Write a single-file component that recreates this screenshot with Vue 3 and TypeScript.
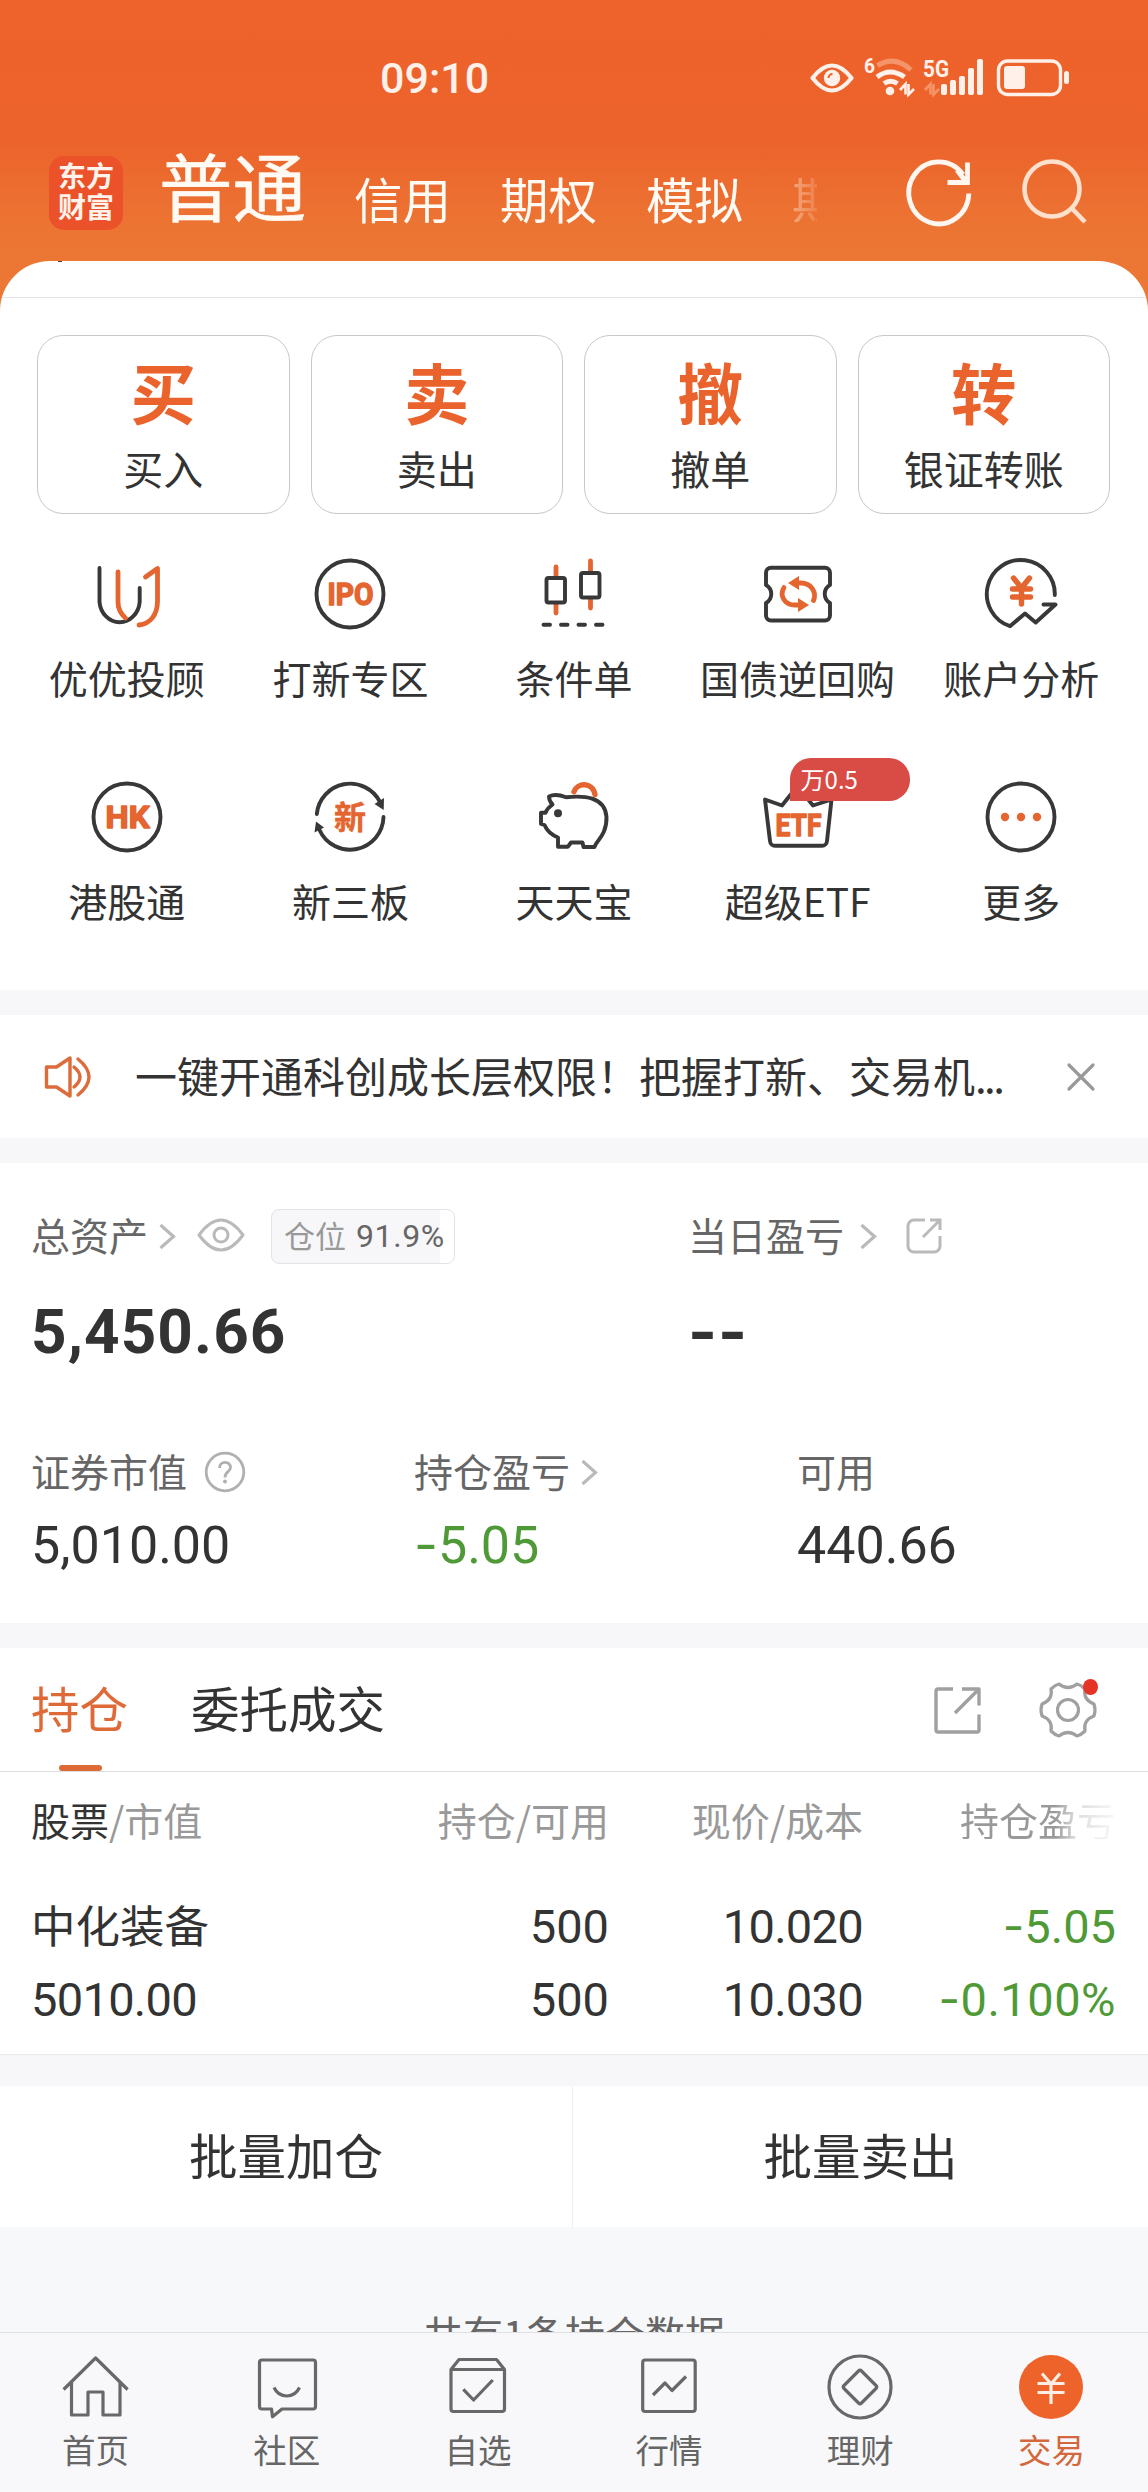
<script setup lang="ts">
interface Action { glyph: string; label: string }
interface Shortcut { icon: string; label: string; badge?: string }
interface NavItem { icon: string; label: string; active?: boolean }

const accounts: string[] = ['信用', '期权', '模拟']

const actions: Action[] = [
  { glyph: '买', label: '买入' },
  { glyph: '卖', label: '卖出' },
  { glyph: '撤', label: '撤单' },
  { glyph: '转', label: '银证转账' },
]

const shortcuts: Shortcut[] = [
  { icon: 'advisor', label: '优优投顾' },
  { icon: 'ipo', label: '打新专区' },
  { icon: 'candles', label: '条件单' },
  { icon: 'ticket', label: '国债逆回购' },
  { icon: 'analysis', label: '账户分析' },
  { icon: 'hk', label: '港股通' },
  { icon: 'neeq', label: '新三板' },
  { icon: 'piggy', label: '天天宝' },
  { icon: 'etf', label: '超级ETF', badge: '万0.5' },
  { icon: 'more', label: '更多' },
]

const navItems: NavItem[] = [
  { icon: 'home', label: '首页' },
  { icon: 'community', label: '社区' },
  { icon: 'watchlist', label: '自选' },
  { icon: 'market', label: '行情' },
  { icon: 'wealth', label: '理财' },
  { icon: 'trade', label: '交易', active: true },
]
</script>

<template>
  <div class="app">
    <div class="top">
      <div class="status">
        <span class="clock">09:10</span>
        <svg class="status-icons" width="264" height="48" viewBox="808 54 264 48" fill="none" stroke="#fff1ea">
          <path d="M812.500 78Q832 53 851.500 78Q832 103 812.500 78Z" stroke-width="4.200" stroke-linejoin="round" />
          <circle cx="832" cy="78" r="8.200" fill="#fff1ea" stroke="none" />
          <path d="M828.500 78A4 4 0 0 1 832.500 74" stroke="#ed622b" stroke-width="2" />
          <text x="864" y="73" class="net" font-size="20" textLength="11" lengthAdjust="spacingAndGlyphs">6</text>
          <path d="M877.500 65.500Q895 55 911 70" stroke="#f59468" stroke-width="5" />
          <path d="M877 77Q890 67 904.500 77" stroke-width="5" />
          <path d="M884 83.500Q890.500 79 897.500 83.500" stroke-width="5" />
          <circle cx="890" cy="91" r="4.300" fill="#fff1ea" stroke="none" />
          <path d="M900 90L905.500 84V94.500M908.500 84V94.500L914 89" stroke-width="2.600" />
          <text x="923" y="77" class="net" font-size="24" textLength="26" lengthAdjust="spacingAndGlyphs">5G</text>
          <path d="M925 90L930.500 84V94.500M933.500 84V94.500L939 89" stroke="#f59468" stroke-width="2.600" />
          <g fill="#fff1ea" stroke="none">
            <rect x="941" y="84" width="6" height="11" rx="2" />
            <rect x="950" y="80" width="6" height="15" rx="2" />
            <rect x="959" y="76" width="6" height="19" rx="2" />
            <rect x="968" y="68" width="6" height="27" rx="2" />
            <rect x="977" y="59" width="6" height="36" rx="2" />
            <rect x="1004" y="66" width="21" height="23" rx="3" />
            <rect x="1064" y="71" width="5" height="13" rx="2.500" />
          </g>
          <rect x="998.500" y="61" width="62" height="33.500" rx="9" stroke-width="3.400" />
        </svg>
      </div>

      <div class="header">
        <div class="logo">东方<br>财富</div>
        <div class="accounts">
          <span class="account current">普通</span>
          <span v-for="name in accounts" :key="name" class="account">{{ name }}</span>
          <span class="account cut">期货</span>
        </div>
        <svg class="refresh" width="70" height="70" viewBox="0 0 70 70" fill="none" stroke="#fff6ef" stroke-width="4.800">
          <path d="M65.800 37.500A30 31 0 1 1 60 18.500" />
          <path d="M64.500 6.500V26.500H44.500M63 26L54 14" />
        </svg>
        <svg class="search" width="70" height="70" viewBox="0 0 70 70" fill="none" stroke="#ffe0cd" stroke-width="4.600">
          <circle cx="33" cy="33" r="27.500" />
          <path d="M52.500 52L66 66" />
        </svg>
      </div>

      <div class="panel">
        <div class="panel-head"><i class="peek"></i></div>
        <div class="actions">
          <div v-for="a in actions" :key="a.label" class="action">
            <b>{{ a.glyph }}</b>
            <span>{{ a.label }}</span>
          </div>
        </div>

        <div class="shortcuts">
          <div v-for="s in shortcuts" :key="s.icon" class="shortcut">
            <div class="icon-wrap">
              <svg width="72" height="72" viewBox="0 0 72 72" class="ico">
                <g v-if="s.icon === 'advisor'">
                  <path d="M8.500 10V44A20.200 22.500 0 0 0 48.700 44V30" />
                  <path class="o" d="M27 14V44C27 51 30 56 34.500 60M54.500 19L66.500 10.500V43C66.500 57 59 66 48 67" />
                </g>
                <g v-else-if="s.icon === 'ipo'">
                  <circle cx="36" cy="36" r="33.500" />
                  <text x="13.500" y="47" font-size="30.500" textLength="46" lengthAdjust="spacingAndGlyphs">IPO</text>
                </g>
                <g v-else-if="s.icon === 'candles'">
                  <path class="o" d="M18 9V18M18 46V55M52.500 3V13M52.500 41V50" />
                  <rect x="8.500" y="20" width="18.500" height="24.500" rx="2" />
                  <rect x="43" y="15" width="18.500" height="24.500" rx="2" />
                  <path d="M5.500 66.700H12M23 66.700H29.500M40.500 66.700H47M58 66.700H64.500" />
                </g>
                <g v-else-if="s.icon === 'ticket'">
                  <path d="M9 9.700H63A5 5 0 0 1 68 14.700V27C61 31 61 41 68 45V57.500A5 5 0 0 1 63 62.500H9A5 5 0 0 1 4 57.500V45C11 41 11 31 4 27V14.700A5 5 0 0 1 9 9.700Z" />
                  <path class="o" d="M36 25H39C49 25 55 34 51.500 42.500M22 29.500C17 38 23 47 33 47H37" />
                  <path class="of" d="M26 25L37 18V32ZM47 47L36 40V54Z" />
                </g>
                <g v-else-if="s.icon === 'analysis'">
                  <path d="M69.800 37A34 34 0 1 0 25 68.200L40 55.500L50.700 64.500L70.500 46.500H58.500" />
                  <path class="o thick" d="M28.500 20L36.500 30L44.500 20M36.500 30V46M27.500 31H45.500M27.500 39H45.500" />
                </g>
                <g v-else-if="s.icon === 'hk'">
                  <circle cx="36" cy="36" r="33.500" />
                  <text x="14.500" y="47" font-size="30.500" textLength="44" lengthAdjust="spacingAndGlyphs">HK</text>
                </g>
                <g v-else-if="s.icon === 'neeq'">
                  <path d="M2.800 33A33.500 33.500 0 0 1 66 21M69.500 36A33.500 33.500 0 0 1 5.500 49" />
                  <path class="df" d="M60.500 23L70 17L69.700 29ZM2 40.500L0.500 51.500L10 46.500Z" />
                  <text x="20" y="48" font-size="32" class="cjk">新</text>
                </g>
                <g v-else-if="s.icon === 'piggy'">
                  <path class="o thick" d="M36 10.700C39 1.500 54.500 0.500 57 13.500" />
                  <path d="M28 16.300C22 14 15 13.500 11 15.500C11 19 12.500 21.500 14.500 23.500C11 26 8.500 29 7.500 31.700H3V43L6.500 44C9 50 14 54 20 56.500V65.700H30L33 61.500H44.500L45.500 66H56.500C58 60 69 54 68.500 36C67 15 45 14.500 28 16.300Z" />
                  <circle class="df" cx="20" cy="32.300" r="4" />
                </g>
                <g v-else-if="s.icon === 'etf'">
                  <path d="M3 18.500L20 24.500L35.500 5L51 24.500L69.500 18.500L65 60A5 5 0 0 1 60 64.700H13A5 5 0 0 1 8 60Z" />
                  <text x="13.500" y="54.500" font-size="32" textLength="46" lengthAdjust="spacingAndGlyphs">ETF</text>
                </g>
                <g v-else>
                  <circle cx="36" cy="36" r="33.500" />
                  <g class="of"><circle cx="20" cy="36" r="4.200" /><circle cx="36" cy="36" r="4.200" /><circle cx="52" cy="36" r="4.200" /></g>
                </g>
              </svg>
              <span v-if="s.badge" class="badge">{{ s.badge }}</span>
            </div>
            <span class="shortcut-label">{{ s.label }}</span>
          </div>
        </div>
      </div>
    </div>

    <div class="notice">
      <svg width="48" height="42" viewBox="0 0 48 42" fill="none" stroke="#dc6c3b" stroke-width="3.400" stroke-linejoin="round" stroke-linecap="round">
        <path d="M2.500 11H12.500L26 2V40L12.500 31H2.500Z" />
        <path d="M30 11Q42 21 30 31M34 3Q56 21 34 39" />
      </svg>
      <span class="notice-text">一键开通科创成长层权限！把握打新、交易机<i>...</i></span>
      <svg class="close" width="28" height="28" viewBox="0 0 28 28" stroke="#999" stroke-width="3.200" stroke-linecap="round">
        <path d="M2 2L26 26M26 2L2 26" />
      </svg>
    </div>

    <div class="assets">
      <div class="row two">
        <div class="col">
          <div class="label">
            <span>总资产</span>
            <svg class="chev" width="18" height="28" viewBox="0 0 18 28"><path d="M2.500 3L15.500 14.500L2.500 26" /></svg>
            <svg class="eye" width="48" height="34" viewBox="0 0 48 34" fill="none" stroke="#bababa" stroke-width="3">
              <path d="M2 17Q24 -13 46 17Q24 47 2 17Z" stroke-linejoin="round" />
              <circle cx="24" cy="17" r="7" />
            </svg>
            <span class="ratio"><em>仓位</em><b>91.9%</b></span>
          </div>
          <div class="total">5,450.66</div>
        </div>
        <div class="col">
          <div class="label">
            <span>当日盈亏</span>
            <svg class="chev wide" width="18" height="28" viewBox="0 0 18 28"><path d="M2.500 3L15.500 14.500L2.500 26" /></svg>
            <svg class="share" width="36" height="38" viewBox="0 0 36 38" fill="none" stroke="#bababa" stroke-width="3">
              <path d="M19 3H8A6 6 0 0 0 2 9V29A6 6 0 0 0 8 35H28A6 6 0 0 0 34 29V19M24 3H34V13M34 3L17 20" />
            </svg>
          </div>
          <div class="total dash">--</div>
        </div>
      </div>
      <div class="row three">
        <div class="col">
          <div class="label">
            <span>证券市值</span>
            <svg class="help" width="42" height="42" viewBox="0 0 42 42" fill="none" stroke="#b0b0b0" stroke-width="2.800">
              <circle cx="21" cy="21" r="18.800" />
              <path d="M15.500 17C15.500 9.500 26.500 9.500 26.500 16.500C26.500 21 21 20.500 21 26.500" />
              <circle cx="21" cy="30.500" r="2" fill="#b0b0b0" stroke="none" />
            </svg>
          </div>
          <div class="value">5,010.00</div>
        </div>
        <div class="col">
          <div class="label">
            <span>持仓盈亏</span>
            <svg class="chev" width="18" height="28" viewBox="0 0 18 28"><path d="M2.500 3L15.500 14.500L2.500 26" /></svg>
          </div>
          <div class="value down"><i>-</i>5.05</div>
        </div>
        <div class="col">
          <div class="label"><span>可用</span></div>
          <div class="value">440.66</div>
        </div>
      </div>
    </div>

    <div class="positions">
      <div class="tabs">
        <span class="tab on">持仓</span>
        <span class="tab">委托成交</span>
        <svg class="export" width="50" height="50" viewBox="0 0 50 50" fill="none" stroke="#a0a0a0" stroke-width="3.400" stroke-linejoin="round">
          <path d="M20 4H5Q3 4 3 6V45Q3 47 5 47H44Q46 47 46 45V29.500M29 4H46V20.500M46 4L22 28" />
        </svg>
        <span class="gear">
          <svg width="58" height="58" viewBox="0 0 58 58" fill="none" stroke="#a0a0a0" stroke-width="3.200" stroke-linejoin="round">
            <path d="M20 3Q29 10 38 3Q42 4 46 8Q44 19 55 23Q57 29 55 35Q44 39 46 50Q42 54 38 55Q29 48 20 55Q16 54 12 50Q14 39 3 35Q1 29 3 23Q14 19 12 8Q16 4 20 3Z" />
            <circle cx="29" cy="29" r="10.500" />
          </svg>
          <i class="dot"></i>
        </span>
      </div>
      <div class="table">
        <div class="tr th">
          <span><b>股票</b>/市值</span><span>持仓/可用</span><span>现价/成本</span><span class="fade">持仓盈亏</span>
        </div>
        <div class="tr">
          <span class="name">中化装备</span><span>500</span><span class="price">10.020</span><span class="down"><i>-</i>5.05</span>
        </div>
        <div class="tr">
          <span class="price">5010.00</span><span>500</span><span class="price">10.030</span><span class="down percent"><i>-</i>0.100%</span>
        </div>
      </div>
    </div>

    <div class="batch">
      <span>批量加仓</span>
      <span>批量卖出</span>
    </div>
    <div class="summary">共有1条持仓数据</div>

    <div class="nav">
      <div v-for="n in navItems" :key="n.icon" class="nav-item" :class="{ active: n.active }">
        <svg width="72" height="72" viewBox="0 0 72 72" fill="none" stroke="#686868" stroke-width="3.200" stroke-linejoin="round">
          <g v-if="n.icon === 'home'">
            <path d="M3.600 38.500L35.600 7L67.600 38.500M11.500 31V64H28V41H43V64H60V31" />
          </g>
          <g v-else-if="n.icon === 'community'">
            <path d="M11 9H62Q64.500 9 64.500 11.500V55.500Q64.500 58 62 58H31L21.500 65.700L20.500 58H11Q8.500 58 8.500 55.500V11.500Q8.500 9 11 9ZM23 36.500Q27 45 35.700 45Q44.500 45 48.500 36.500" />
          </g>
          <g v-else-if="n.icon === 'watchlist'">
            <path d="M9 18.500L17 8.500H54.500L62.500 18.500V58Q62.500 60.500 60 60.500H11.500Q9 60.500 9 58ZM9 18.500H62.500M21.300 38.300L31.600 49L50.800 29" />
          </g>
          <g v-else-if="n.icon === 'market'">
            <rect x="9.700" y="9" width="52.500" height="51.500" rx="2.500" />
            <path d="M20 44L32 32L39 39.500L53 25.500" />
          </g>
          <g v-else-if="n.icon === 'wealth'">
            <circle cx="36" cy="36" r="31" />
            <path d="M37.500 20L52 34.500Q53.500 36 52 37.500L37.500 52Q36 53.500 34.500 52L20 37.500Q18.500 36 20 34.500L34.500 20Q36 18.500 37.500 20Z" />
          </g>
          <g v-else>
            <circle cx="36" cy="36" r="32" fill="#ed6329" stroke="none" />
            <path stroke="#ffeee5" d="M27 22.500L36 33L45 22.500M36 33V53M22.500 32.500H49.500M22.500 41.500H49.500" />
          </g>
        </svg>
        <span>{{ n.label }}</span>
      </div>
    </div>
  </div>
</template>

<style>
body { background: #f7f8fa; }
</style>

<style scoped>
.app {
  width: 1148px;
  height: 2492px;
  overflow: hidden;
  display: flex;
  flex-direction: column;
  background: #f7f7fa;
  color: #333;
  font-family: "Noto Sans CJK SC", sans-serif;
  line-height: 1;
  white-space: nowrap;
}
svg { display: block; flex: none; overflow: visible; }
i, em { font-style: normal; }

.top { height: 990px; background: linear-gradient(#ee622b 0, #ec632b 140px, #ec7433 225px, #ec7935 305px); }
.status { height: 156px; display: flex; align-items: center; box-sizing: border-box; padding-left: 380px; }
.clock { width: 428px; color: #fff1ea; font: 500 43px/1 Roboto, sans-serif; }
.net { font-family: Roboto, sans-serif; font-weight: 700; fill: #fff1ea; stroke: none; }

.header { height: 105px; display: flex; align-items: flex-start; padding-left: 49px; }
.logo {
  width: 74px; height: 74px; border-radius: 15px; background: #eb5229; color: #fff3ec;
  box-sizing: border-box; padding-top: 4px; text-align: center;
  font-size: 28px; font-weight: 700; line-height: 31px;
}
.accounts { width: 658px; height: 66px; margin-left: 36px; display: flex; align-items: flex-end; overflow: visible; }
.account { font-size: 48.500px; color: #fffaf4; margin-right: 49px; }
.account.current { font-size: 73.500px; margin-right: 48px; -webkit-text-stroke: 0.6px #fffaf4; padding-bottom: 1px; }
.account.cut {
  width: 25px; margin: 0; overflow: hidden; opacity: 0.4;
  mask-image: linear-gradient(90deg, #000, rgba(0, 0, 0, 0.3));
}
.refresh { margin: 0 0 0 86px; }
.search { margin: 0 0 0 46px; }

.panel { height: 729px; background: #fff; border-radius: 50px 50px 0 0; overflow: hidden; }
.panel-head { height: 36px; border-bottom: 1px solid #e3e3e3; padding-left: 58px; }
.peek { display: block; width: 4px; height: 1px; background: #6b3a2a; }
.actions { display: flex; gap: 21px; padding: 37px 38px 0 37px; }
.action {
  flex: 1; height: 179px; box-sizing: border-box; border: 1px solid #c8c8c8; border-radius: 26px;
  display: flex; flex-direction: column; align-items: center;
}
.action b { font-size: 65.500px; font-weight: 700; color: #eb632c; margin-top: 22px; }
.action span { font-size: 40px; margin-top: 24px; }

.shortcuts { display: grid; grid-template-columns: repeat(5, 1fr); grid-auto-rows: 223px; padding: 44px 15px 0; }
.shortcut { display: flex; flex-direction: column; align-items: center; }
.icon-wrap { position: relative; width: 72px; height: 72px; }
.shortcut-label { font-size: 39px; margin-top: 28px; }
.ico { fill: none; stroke: #383838; stroke-width: 3.9; stroke-linecap: round; stroke-linejoin: round; }
.ico .o { stroke: #e4652f; stroke-width: 4.8; }
.ico .thick { stroke-width: 5.4; }
.ico .of { fill: #e4652f; stroke: none; }
.ico .df { fill: #383838; stroke: none; }
.ico text { fill: #e4652f; stroke: #e4652f; stroke-width: 1.4; font-family: Roboto, sans-serif; font-weight: 700; }
.ico text.cjk { font-family: "Noto Sans CJK SC", sans-serif; stroke-width: 0.5; }
.badge {
  position: absolute; left: 28px; top: -23px; width: 120px; height: 43px; box-sizing: border-box;
  padding-left: 11px; background: #d94b45; color: #fff; border-radius: 21px 21px 21px 0;
  font-size: 24px; line-height: 41px;
}

.notice { margin-top: 25px; height: 123px; flex: none; background: #fff; display: flex; align-items: center; padding-left: 44px; }
.notice-text { width: 895px; margin: -4px 0 0 43px; font-size: 42px; }
.notice-text i { letter-spacing: -2.6px; }
.close { margin-left: 37px; }

.assets { margin-top: 25px; height: 460px; flex: none; background: #fff; box-sizing: border-box; padding: 45px 0 0 31px; }
.row { display: flex; }
.two .col:first-child { width: 657px; }
.three { margin-top: 81px; }
.three .col { width: 383px; flex: none; }
.three .col:last-child { width: 300px; }
.label { height: 56px; display: flex; align-items: center; font-size: 39px; color: #666; }
.label > span:first-child { margin-top: -4px; }
.chev { margin-left: 10px; fill: none; stroke: #bababa; stroke-width: 3.2; }
.chev.wide { margin-left: 15px; }
.eye { margin-left: 21px; margin-top: -2px; }
.ratio {
  margin-left: 26px; width: 184px; height: 55px; box-sizing: border-box; border: 1px solid #e3e3e6; border-radius: 8px;
  display: flex; align-items: center; padding-left: 12px;
  background: linear-gradient(90deg, #f7f7fa 92.500%, #fff 92.500%);
}
.ratio em { font-size: 31px; color: #999; margin-top: -4px; }
.ratio b { font: 400 32px/1 Roboto, sans-serif; letter-spacing: 0.6px; margin-left: 10px; }
.share { margin: -1px 0 0 29px; }
.help { margin-left: 17px; margin-top: -1px; }
.total { font: 700 62px/62px Roboto, sans-serif; letter-spacing: 1.1px; margin-top: 37px; height: 62px; }
.total.dash { font-family: Inter, sans-serif; }
.value { font: 400 52px/52px Roboto, sans-serif; margin-top: 20px; letter-spacing: 0; }
.value i, .tr i { font-family: Inter, sans-serif; line-height: 0; }
.down { color: #4f9a37; }

.positions { margin-top: 25px; height: 407px; flex: none; background: #fff; border-bottom: 1px solid #e8eaee; box-sizing: border-box; }
.tabs { height: 123px; display: flex; align-items: center; border-bottom: 1px solid #ddd; padding-left: 31px; font-size: 48.500px; }
.tab { height: 123px; line-height: 118px; margin-right: 63px; position: relative; }
.tab.on { color: #de6a38; }
.tab.on::after { content: ""; position: absolute; left: 28px; bottom: 0; width: 43px; height: 6px; border-radius: 3px; background: #de6a38; }
.export { margin-left: 485px; }
.gear { position: relative; margin-left: 56px; }
.dot { position: absolute; right: -1px; top: -2px; width: 15px; height: 16px; border-radius: 50%; background: #e53425; }
.tr { display: grid; grid-template-columns: 352px 226px 254px 253px; padding-left: 31px; height: 73px; align-items: center; font: 400 47px/1 Roboto, sans-serif; }
.tr span:not(:first-child) { text-align: right; }
.tr .price { letter-spacing: -0.7px; }
.tr .percent { letter-spacing: 0.5px; }
.th { height: 118px; padding-bottom: 0; font: 400 39px/1 "Noto Sans CJK SC", sans-serif; color: #999; align-items: start; box-sizing: border-box; padding-top: 28px; }
.th b { font-weight: 400; color: #333; }
.fade { color: transparent; background: linear-gradient(90deg, #999 76%, #ddd 84%, #fff 104%); background-clip: text; }
.name { font: 400 44.500px/1 "Noto Sans CJK SC", sans-serif; margin-top: -5px; }

.batch { margin-top: 31px; height: 141px; flex: none; display: flex; background: #fff; }
.batch span { flex: 1; text-align: center; font-size: 48.500px; line-height: 136px; }
.batch span:first-child { flex: none; width: 572px; border-right: 1px solid #eee; }
.summary { height: 105px; flex: none; overflow: hidden; box-sizing: border-box; padding-top: 86px; text-align: center; font-size: 40px; color: #666; background: #f7f8fa; }

.nav { height: 160px; flex: none; box-sizing: border-box; border-top: 1px solid #e0e0e2; background: #f8f8fb; display: flex; padding-right: 1px; }
.nav-item { flex: 1; display: flex; flex-direction: column; align-items: center; padding-top: 18px; font-size: 33.500px; color: #666; }
.nav-item span { margin-top: 9px; }
.nav-item.active { color: #d2683c; }
</style>
